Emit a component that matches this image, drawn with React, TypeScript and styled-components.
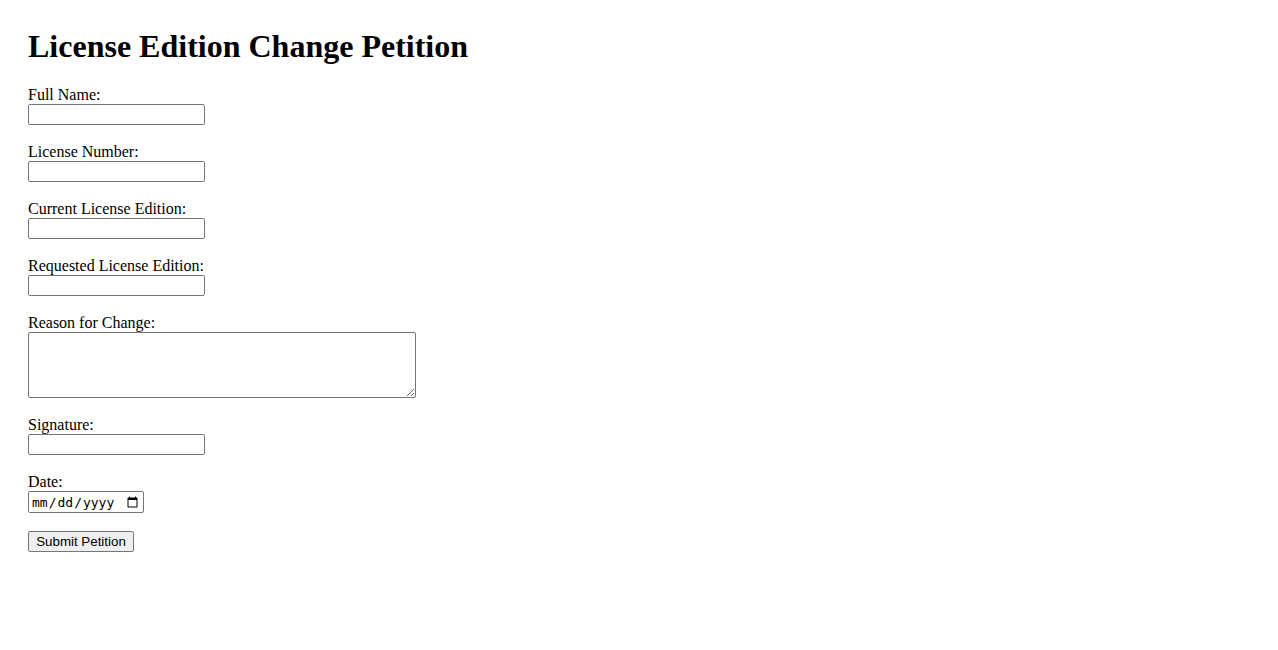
import React from "react";
import styled, { createGlobalStyle } from "styled-components";

const GlobalStyle = createGlobalStyle`
  html, body {
    margin: 0;
    padding: 0;
    background: #ffffff;
  }
  body {
    font-family: "Liberation Serif", "Times New Roman", serif;
    color: #000000;
  }
`;

const Page = styled.div`
  padding: 28px;
`;

const Title = styled.h1`
  font-family: "Liberation Serif", "Times New Roman", serif;
  font-size: 32px;
  font-weight: bold;
  margin: 0 0 21.44px;
`;

const Form = styled.form`
  display: flex;
  flex-direction: column;
  align-items: flex-start;
`;

const Field = styled.div`
  display: flex;
  flex-direction: column;
  align-items: flex-start;
  margin-bottom: 18px;
`;

const Label = styled.label`
  display: block;
  font-size: 16px;
  line-height: 18px;
`;

const TextInput = styled.input`
  box-sizing: border-box;
  width: 177px;
  height: 21px;
  margin: 0;
  padding: 1px 2px;
  border: 1px solid #767676;
  border-radius: 2px;
  font-family: "Liberation Sans", Arial, sans-serif;
  font-size: 13.33px;
  background: #ffffff;
`;

const TextArea = styled.textarea`
  box-sizing: border-box;
  width: 388px;
  height: 66px;
  margin: 0;
  padding: 2px;
  border: 1px solid #767676;
  border-radius: 2px;
  font-family: "Liberation Mono", monospace;
  font-size: 13.33px;
  display: block;
`;

const DateInput = styled.input`
  box-sizing: border-box;
  width: 116px;
  height: 22px;
  margin: 0;
  padding: 1px 2px;
  border: 1px solid #767676;
  border-radius: 2px;
  font-family: "DejaVu Sans Mono", "Liberation Mono", monospace;
  font-size: 13px;
  color: #000000;
  background: #ffffff;
`;

const SubmitButton = styled.button`
  box-sizing: border-box;
  width: 106px;
  height: 21px;
  margin: 0;
  padding: 1px 6px;
  border: 1px solid #767676;
  border-radius: 2px;
  background: #efefef;
  font-family: "Liberation Sans", Arial, sans-serif;
  font-size: 13.33px;
  color: #000000;
  line-height: 17px;
`;

const textFields = [
  { id: "fullName", label: "Full Name:" },
  { id: "licenseNumber", label: "License Number:" },
  { id: "currentEdition", label: "Current License Edition:" },
  { id: "requestedEdition", label: "Requested License Edition:" },
];

export default function App() {
  return (
    <>
      <GlobalStyle />
      <Page>
        <Title>License Edition Change Petition</Title>
        <Form onSubmit={(e) => e.preventDefault()}>
          {textFields.map((f) => (
            <Field key={f.id}>
              <Label htmlFor={f.id}>{f.label}</Label>
              <TextInput type="text" id={f.id} name={f.id} />
            </Field>
          ))}
          <Field>
            <Label htmlFor="reason">Reason for Change:</Label>
            <TextArea id="reason" name="reason" />
          </Field>
          <Field>
            <Label htmlFor="signature">Signature:</Label>
            <TextInput type="text" id="signature" name="signature" />
          </Field>
          <Field>
            <Label htmlFor="date">Date:</Label>
            <DateInput type="date" id="date" name="date" />
          </Field>
          <SubmitButton type="submit">Submit Petition</SubmitButton>
        </Form>
      </Page>
    </>
  );
}
